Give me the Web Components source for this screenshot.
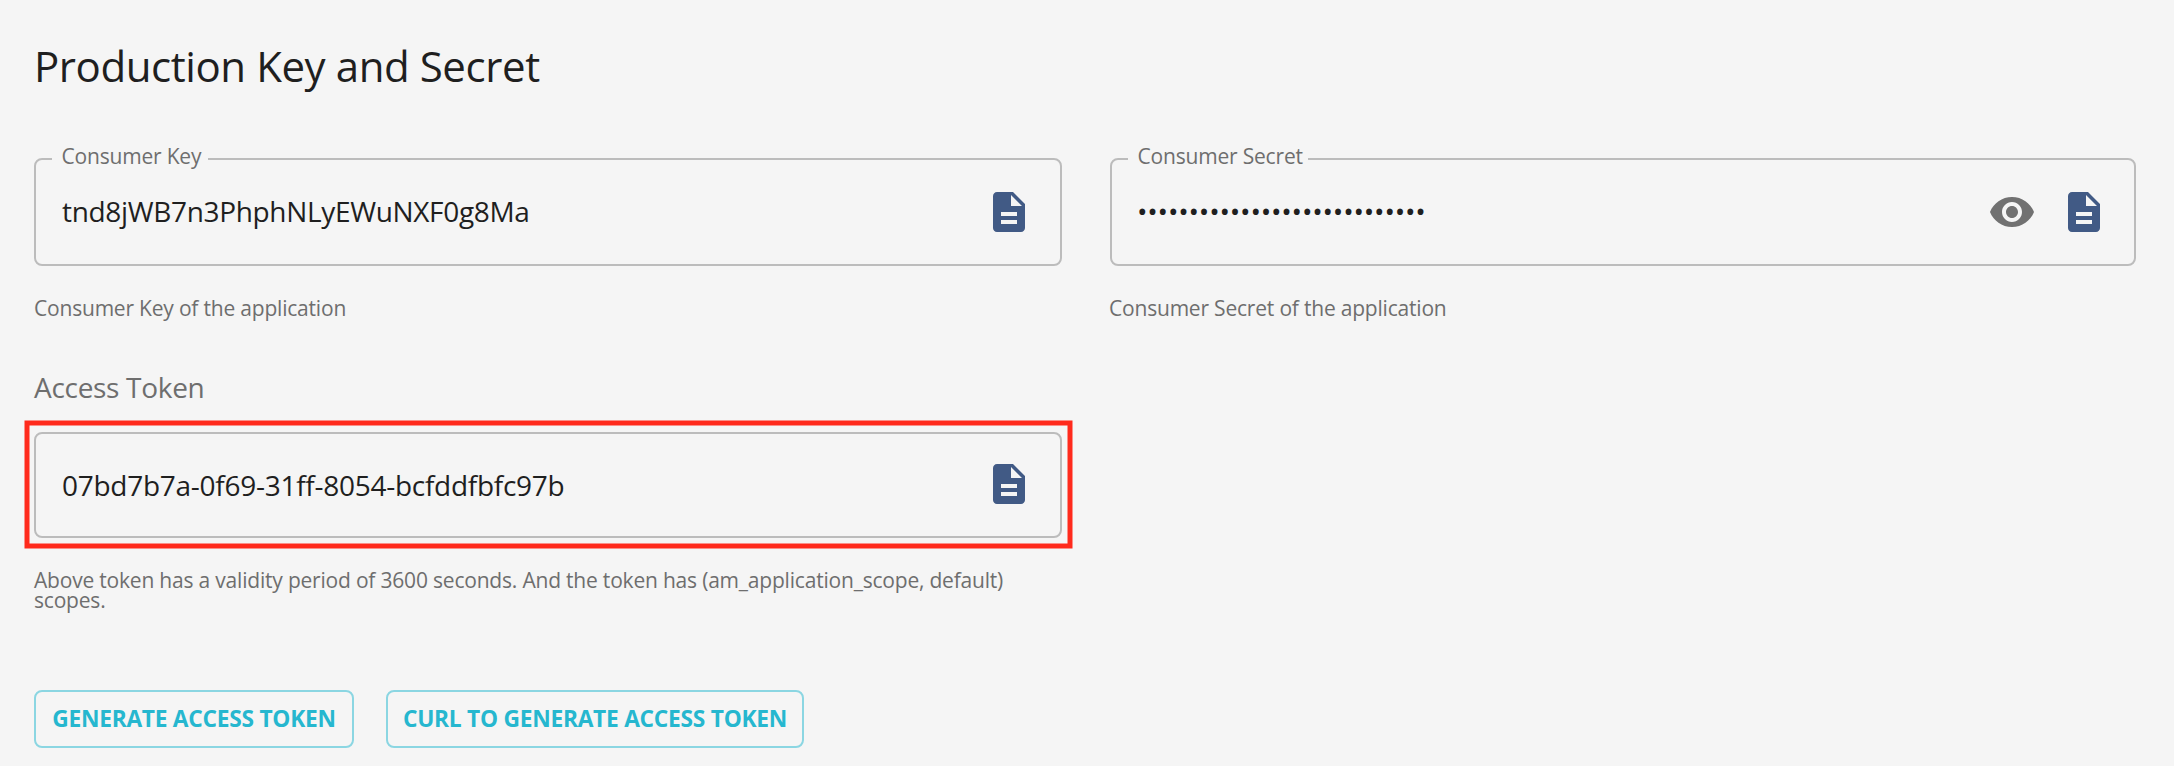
<!DOCTYPE html>
<html lang="en">
<head>
<meta charset="utf-8">
<title>Production Key and Secret</title>
<style>
  body { margin: 0; background: #f5f5f5; font-family: "Open Sans", sans-serif; }
</style>
</head>
<body>
<key-panel></key-panel>
<script>
const define = (name, html, setup) => {
  const template = document.createElement('template');
  template.innerHTML = html;
  customElements.define(name, class extends HTMLElement {
    constructor() {
      super();
      this.attachShadow({ mode: 'open' }).append(template.content.cloneNode(true));
    }
    connectedCallback() { if (setup) setup(this, this.shadowRoot); }
  });
};

define('doc-icon', `
  <style>:host { display: block; width: 48px; height: 48px; color: #415a85; } svg { display: block; }</style>
  <svg width="48" height="48" viewBox="0 0 24 24" fill="currentColor"><path d="M14 2H6c-1.1 0-1.99.9-1.99 2L4 20c0 1.1.89 2 1.99 2H18c1.1 0 2-.9 2-2V8l-6-6zm2 16H8v-2h8v2zm0-4H8v-2h8v2zm-3-5V3.5L18.5 9H13z"/></svg>`);

define('eye-icon', `
  <style>:host { display: block; width: 48px; height: 48px; color: #717171; } svg { display: block; }</style>
  <svg width="48" height="48" viewBox="0 0 24 24" fill="currentColor"><path d="M12 4.5C7 4.5 2.73 7.61 1 12c1.73 4.39 6 7.5 11 7.5s9.27-3.11 11-7.5c-1.73-4.39-6-7.5-11-7.5zM12 17c-2.76 0-5-2.24-5-5s2.24-5 5-5 5 2.24 5 5-2.24 5-5 5zm0-8c-1.66 0-3 1.34-3 3s1.34 3 3 3 3-1.34 3-3-1.34-3-3-3z"/></svg>`);

define('outlined-field', `
  <style>
    :host { display: block; }
    .box { position: relative; box-sizing: border-box; height: var(--box-height, 108px); display: flex;
      align-items: center; padding: 0 var(--pad-right, 27px) 0 var(--pad-left, 26px); border: 2px solid #bcbcbc; border-radius: 8px; }
    .label { position: absolute; left: 16px; top: -18px; box-sizing: border-box; width: var(--notch); height: 28px;
      padding-left: 9.5px; background: #f5f5f5; color: #6e6e6e; font-size: 21px; line-height: 28px;
      letter-spacing: -0.19px; white-space: nowrap; }
    .label:empty { display: none; }
    .value { flex: 1; margin-top: var(--value-shift, -2px); font-size: 28px; line-height: 40px;
      letter-spacing: var(--value-spacing, -0.33px); color: #1f1f1f; white-space: nowrap; }
    .icons { display: flex; gap: 24px; margin-top: var(--icon-shift, 0px); }
    .helper { margin: 32px 0 0 var(--helper-shift, 0px); font-size: 21px; line-height: 20px;
      letter-spacing: var(--helper-spacing, -0.2px); color: #6e6e6e; }
  </style>
  <div class="box"><div class="label"></div><div class="value"></div><div class="icons"><slot name="icon"></slot></div></div>
  <p class="helper"><slot></slot></p>`, (el, root) => {
  root.querySelector('.label').textContent = el.getAttribute('label') || '';
  root.querySelector('.value').textContent = el.getAttribute('value');
});

define('outline-button', `
  <style>
    :host { display: block; }
    button { width: 100%; height: 58px; padding: 0; border: 2px solid #8bd6e2; border-radius: 8px; background: none;
      color: #26b7cf; font: 700 22.75px/54px "Open Sans", sans-serif; letter-spacing: -0.26px; white-space: nowrap;
      display: flex; justify-content: center; }
  </style>
  <button><slot></slot></button>`);

define('highlight-frame', `
  <style>
    :host { position: absolute; left: 24px; top: 420px; width: 1049px; height: 129px; pointer-events: none; }
    svg { display: block; }
  </style>
  <svg width="1049" height="129"><rect x="3" y="3" width="1043" height="123" fill="none" stroke="#ff2a1c" stroke-width="5"/></svg>`);

define('key-panel', `
  <style>
    :host { display: block; position: relative; box-sizing: border-box; height: 766px; padding: 36px 38px 0 34px; overflow: hidden; }
    h2 { margin: 0 0 62px; font-size: 42px; line-height: 60px; font-weight: 400; letter-spacing: -0.42px; color: #1f1f1f; }
    .row { display: grid; grid-template-columns: 1028px 1026px; column-gap: 48px; }
    h3 { margin: 49px 0 25px; font-size: 28px; line-height: 40px; font-weight: 400; letter-spacing: -0.3px; color: #6e6e6e; }
    .actions { display: flex; gap: 32px; margin-top: 80px; }
  </style>
  <h2>Production Key and Secret</h2>
  <div class="row">
    <outlined-field label="Consumer Key" value="tnd8jWB7n3PhphNLyEWuNXF0g8Ma" style="--notch:156px">
      <doc-icon slot="icon"></doc-icon>Consumer Key of the application
    </outlined-field>
    <outlined-field label="Consumer Secret" value="••••••••••••••••••••••••••••" style="--notch:180px;--pad-left:25px;--pad-right:26px;--helper-shift:-1px;--value-spacing:-0.22px">
      <eye-icon slot="icon"></eye-icon><doc-icon slot="icon"></doc-icon>Consumer Secret of the application
    </outlined-field>
  </div>
  <h3>Access Token</h3>
  <div class="row">
    <outlined-field value="07bd7b7a-0f69-31ff-8054-bcfddfbfc97b" style="--box-height:106px;--icon-shift:-2px;--value-shift:-1px;--value-spacing:-0.27px">
      <doc-icon slot="icon"></doc-icon>Above token has a validity period of 3600 seconds. And the token has (am_application_scope, default) scopes.
    </outlined-field>
  </div>
  <div class="actions">
    <outline-button style="width:320px">GENERATE ACCESS TOKEN</outline-button>
    <outline-button style="width:418px">CURL TO GENERATE ACCESS TOKEN</outline-button>
  </div>
  <highlight-frame></highlight-frame>`);
</script>
</body>
</html>
